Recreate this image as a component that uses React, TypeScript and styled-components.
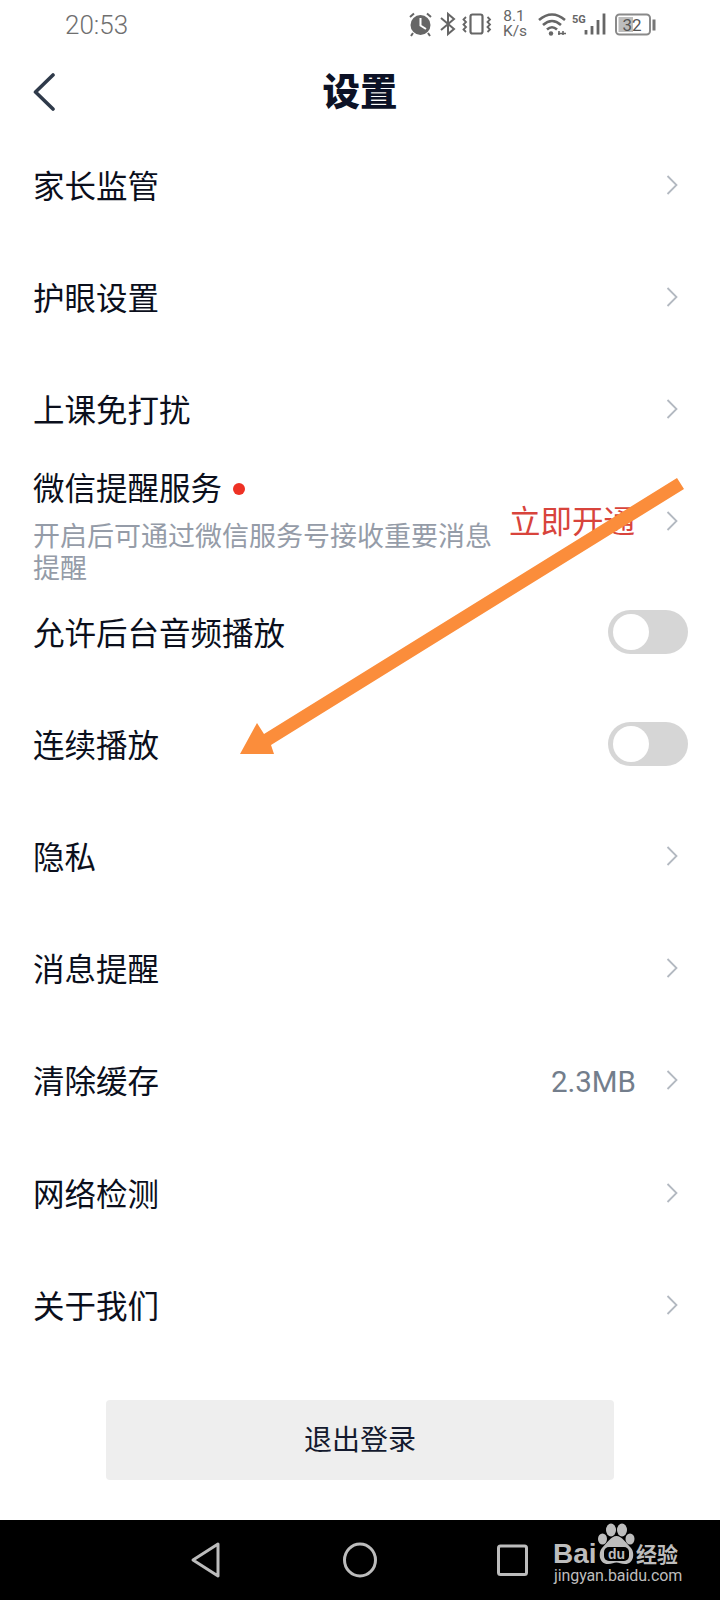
import React from "react";
import styled, { createGlobalStyle } from "styled-components";

const Global = createGlobalStyle`
  html, body { margin: 0; padding: 0; background: #fff; }
  * { box-sizing: border-box; }
`;

const CJK = `"Noto Sans CJK SC", "Noto Sans", sans-serif`;

const Screen = styled.div`
  position: relative;
  width: 720px;
  height: 1600px;
  background: #fff;
  display: flex;
  flex-direction: column;
  font-family: ${CJK};
  overflow: hidden;
`;

const StatusBar = styled.div`
  height: 50px;
  display: flex;
  align-items: center;
  justify-content: space-between;
  padding: 0 64px 0 65px;
`;
const Time = styled.span`
  font-family: Roboto, sans-serif;
  font-weight: 300;
  font-size: 26px;
  color: #6f6f6f;
`;
const StatusIcons = styled.svg`
  display: block;
`;

const NavBar = styled.header`
  height: 79px;
  position: relative;
  display: flex;
  align-items: center;
  justify-content: center;
  padding-bottom: 2px;
`;
const BackButton = styled.span`
  position: absolute;
  left: 32px;
  top: 23px;
  line-height: 0;
`;
const Title = styled.h1`
  margin: 0;
  font-size: 37.5px;
  line-height: 48px;
  font-weight: 900;
  color: #0c1226;
`;

const List = styled.div`
  display: flex;
  flex-direction: column;
`;
const Row = styled.div<{ $tall?: boolean }>`
  height: ${(p) => (p.$tall ? 110 : 112.2)}px;
  display: flex;
  align-items: center;
  padding: 0 32px 0 33px;
`;
const RowMain = styled.div<{ $tall?: boolean }>`
  flex: 1;
  min-width: 0;
  padding-top: ${(p) => (p.$tall ? 7 : 0)}px;
`;
const RowLabel = styled.div`
  display: flex;
  align-items: center;
  margin-top: -2px;
  font-size: 31.5px;
  line-height: 44px;
  font-weight: 400;
  color: #0b0f1c;
`;
const Dot = styled.i`
  width: 12px;
  height: 12px;
  border-radius: 50%;
  background: #ee3124;
  margin: 6px 0 0 11px;
`;
const RowHint = styled.div`
  width: 470px;
  margin-top: 11px;
  font-size: 27px;
  line-height: 32px;
  color: #959ca8;
`;
const Value = styled.span`
  font-family: Roboto, sans-serif;
  font-size: 29.5px;
  color: #737e8c;
  margin: 3px 30px 0 0;
`;
const Promo = styled.span`
  font-size: 31.5px;
  font-weight: 400;
  color: #d8443c;
  margin-right: 31px;
  margin-top: -4px;
`;
const ChevronWrap = styled.span`
  width: 12px;
  margin-right: 10px;
  line-height: 0;
`;
const Toggle = styled.span`
  width: 80px;
  height: 44px;
  border-radius: 22px;
  background: #d6d6d6;
  padding: 4px 0 0 5px;
  display: block;
`;
const Knob = styled.span`
  display: block;
  width: 36px;
  height: 36px;
  border-radius: 50%;
  background: #fff;
`;

const LogoutWrap = styled.div`
  display: flex;
  justify-content: center;
  padding-top: 39px;
`;
const Logout = styled.button`
  width: 508px;
  height: 80px;
  border: 0;
  border-radius: 4px;
  padding: 0 0 3px;
  background: #eeeeee;
  font-family: ${CJK};
  font-size: 28px;
  color: #141a2e;
`;

const SystemBar = styled.nav`
  position: absolute;
  left: 0;
  right: 0;
  bottom: 0;
  height: 80px;
  background: #000;
  display: block;
`;
const ArrowLayer = styled.svg`
  position: absolute;
  left: 0;
  top: 0;
  pointer-events: none;
`;
const Watermark = styled.div`
  position: absolute;
  left: 553px;
  top: 1523px;
  width: 130px;
  height: 62px;
  color: #bdbdbd;
`;
const WmBai = styled.span`
  position: absolute;
  left: 0;
  top: 16px;
  font-family: "Liberation Sans", sans-serif;
  font-weight: 700;
  font-size: 28px;
  line-height: 30px;
`;
const WmJy = styled.span`
  position: absolute;
  left: 83px;
  top: 17px;
  font-size: 21px;
  line-height: 26px;
  font-weight: 700;
  white-space: nowrap;
`;
const WmUrl = styled.span`
  position: absolute;
  left: 1px;
  top: 43px;
  font-family: Roboto, sans-serif;
  font-size: 16px;
  line-height: 20px;
  white-space: nowrap;
  letter-spacing: -0.1px;
`;
const WmPaw = styled.svg`
  position: absolute;
  left: 44px;
  top: 0;
`;

const Chevron = () => (
  <svg width="12" height="20" viewBox="0 0 12 20" fill="none">
    <path d="M1.5 1 L10.5 10 L1.5 19" stroke="#b3b9c1" strokeWidth="1.8" />
  </svg>
);

type Item = { label: string; value?: string; toggle?: boolean };
const top: Item[] = [{ label: "家长监管" }, { label: "护眼设置" }, { label: "上课免打扰" }];
const middle: Item[] = [
  { label: "允许后台音频播放", toggle: true },
  { label: "连续播放", toggle: true },
  { label: "隐私" },
  { label: "消息提醒" },
  { label: "清除缓存", value: "2.3MB" },
  { label: "网络检测" },
  { label: "关于我们" },
];

const SettingRow = ({ label, value, toggle }: Item) => (
  <Row>
    <RowMain>
      <RowLabel>{label}</RowLabel>
    </RowMain>
    {value && <Value>{value}</Value>}
    {toggle ? (
      <Toggle>
        <Knob />
      </Toggle>
    ) : (
      <ChevronWrap>
        <Chevron />
      </ChevronWrap>
    )}
  </Row>
);

const StatusGlyphs = () => (
  <StatusIcons width="247" height="40" viewBox="409 5 247 40">
    {/* alarm */}
    <circle cx="420.5" cy="25" r="10" fill="#666" />
    <path d="M420.5 18 V25.5 L426 29" stroke="#fff" strokeWidth="2" fill="none" />
    <path d="M410 17 L414 13.5 M431 17 L427 13.5 M413 33 L411 36 M428 33 L430 36" stroke="#666" strokeWidth="2" />
    {/* bluetooth */}
    <path d="M441 18 L454 29 L448 34 V14 L454 19 L441 30" stroke="#666" strokeWidth="2" fill="none" />
    {/* vibrate */}
    <rect x="470.5" y="14.5" width="12" height="19" rx="2" stroke="#666" strokeWidth="2.2" fill="none" />
    <path d="M466 17 L463.5 19.5 L466 22 L463.5 24.5 L466 27 L463.5 29.5 L466 32" stroke="#666" strokeWidth="1.8" fill="none" />
    <path d="M487.5 17 L490 19.5 L487.5 22 L490 24.5 L487.5 27 L490 29.5 L487.5 32" stroke="#666" strokeWidth="1.8" fill="none" />
    {/* speed */}
    <text x="514" y="21" textAnchor="middle" fontFamily="Roboto, sans-serif" fontSize="15.5" fill="#666">8.1</text>
    <text x="515" y="36" textAnchor="middle" fontFamily="Roboto, sans-serif" fontSize="15.5" fill="#666">K/s</text>
    {/* wifi */}
    <path d="M539 20 Q552 9 565 20" stroke="#666" strokeWidth="2.6" fill="none" />
    <path d="M543 25 Q552 17 561 25" stroke="#666" strokeWidth="2.6" fill="none" />
    <path d="M547 29.5 Q552 25 557 29.5" stroke="#666" strokeWidth="2.6" fill="none" />
    <circle cx="551" cy="33.5" r="2.2" fill="#666" />
    <path d="M559 31 V35 M563 31 V35 M558 33.5 H566" stroke="#666" strokeWidth="1.6" />
    {/* 5G */}
    <text x="572" y="23" fontFamily="Roboto, sans-serif" fontWeight="700" fontSize="11" fill="#666">5G</text>
    {/* signal */}
    <path d="M586 30 V34.5 M592 26 V34.5 M598 20 V34.5 M604 13.5 V34.5" stroke="#666" strokeWidth="2.8" />
    {/* battery */}
    <rect x="616" y="14.5" width="34" height="20" rx="3.5" stroke="#8a8a8a" strokeWidth="2" fill="none" />
    <rect x="618.5" y="17" width="14.5" height="15" fill="#bdbdbd" />
    <text x="632" y="30.5" textAnchor="middle" fontFamily="Roboto, sans-serif" fontSize="17" fill="#555">32</text>
    <rect x="652.5" y="19.5" width="3" height="11" fill="#777" />
  </StatusIcons>
);

export default function App() {
  return (
    <>
      <Global />
      <Screen>
        <StatusBar>
          <Time>20:53</Time>
          <StatusGlyphs />
        </StatusBar>
        <NavBar>
          <BackButton>
            <svg width="24" height="38" viewBox="0 0 24 38" fill="none">
              <path d="M21 2 L3.5 19 L21 36" stroke="#2f3a4a" strokeWidth="3.6" strokeLinecap="round" strokeLinejoin="round" />
            </svg>
          </BackButton>
          <Title>设置</Title>
        </NavBar>
        <List>
          {top.map((it) => (
            <SettingRow key={it.label} {...it} />
          ))}
          <Row $tall>
            <RowMain $tall>
              <RowLabel>
                微信提醒服务
                <Dot />
              </RowLabel>
              <RowHint>开启后可通过微信服务号接收重要消息提醒</RowHint>
            </RowMain>
            <Promo>立即开通</Promo>
            <ChevronWrap>
              <Chevron />
            </ChevronWrap>
          </Row>
          {middle.map((it) => (
            <SettingRow key={it.label} {...it} />
          ))}
        </List>
        <LogoutWrap>
          <Logout>退出登录</Logout>
        </LogoutWrap>
        <SystemBar>
          <svg width="720" height="80" viewBox="0 1520 720 80" fill="none">
            <path d="M218 1544 L193 1560 L218 1576 Z" stroke="#bcbcbc" strokeWidth="3" strokeLinejoin="round" />
            <ellipse cx="360" cy="1560" rx="15.5" ry="16" stroke="#bcbcbc" strokeWidth="3" />
            <rect x="498.5" y="1546" width="28" height="28.5" rx="2" stroke="#bcbcbc" strokeWidth="3" />
          </svg>
        </SystemBar>
        <ArrowLayer width="720" height="1600" viewBox="0 0 720 1600">
          <path d="M677 478 L684 489 L271 745 L274 754 L240 754 L257 723 L264 734 Z" fill="#fb8d3b" />
        </ArrowLayer>
        <Watermark>
          <WmPaw width="40" height="46" viewBox="0 0 40 46">
            <ellipse cx="14" cy="7" rx="5" ry="6.5" fill="#bdbdbd" />
            <ellipse cx="25" cy="7" rx="5" ry="6.5" fill="#bdbdbd" />
            <ellipse cx="5.5" cy="16" rx="4.5" ry="5.5" fill="#bdbdbd" />
            <ellipse cx="33" cy="16" rx="4.5" ry="5.5" fill="#bdbdbd" />
            <path d="M19.5 13 C25 13 29 20 34 25 C38 30 37 41 28 41 C24 41 22 39.5 19.5 39.5 C17 39.5 15 41 11 41 C2 41 1 30 5 25 C10 20 14 13 19.5 13 Z" fill="#bdbdbd" />
            <rect x="7" y="24" width="25" height="14" rx="5" fill="#000" />
            <text x="19.5" y="35.5" textAnchor="middle" fontFamily="Liberation Sans, sans-serif" fontWeight="700" fontSize="14" fill="#bdbdbd">du</text>
          </WmPaw>
          <WmBai>Bai</WmBai>
          <WmJy>经验</WmJy>
          <WmUrl>jingyan.baidu.com</WmUrl>
        </Watermark>
      </Screen>
    </>
  );
}
